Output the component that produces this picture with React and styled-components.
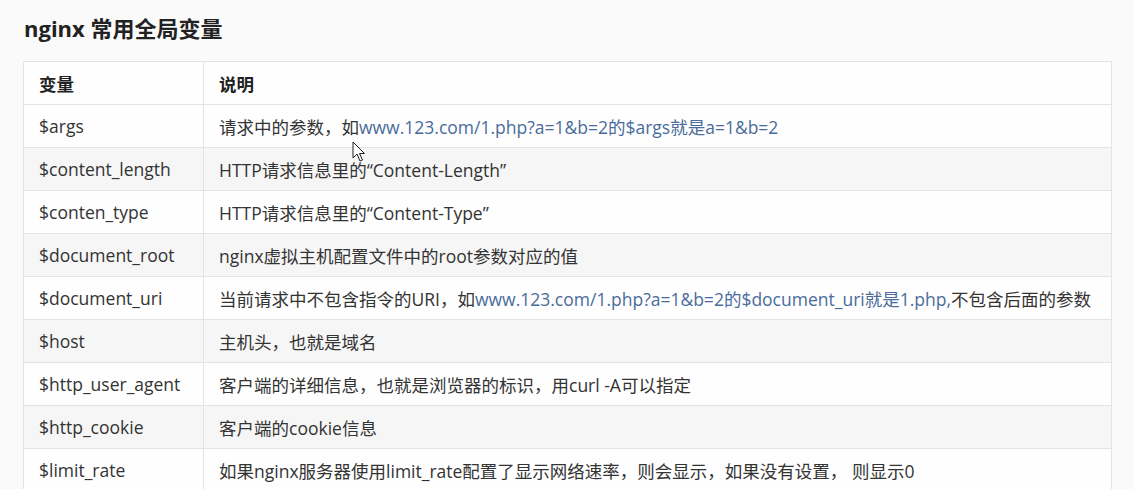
import React from 'react'
import styled, { createGlobalStyle } from 'styled-components'

const GlobalStyle = createGlobalStyle`
  html, body {
    margin: 0;
    padding: 0;
    background: #fafafa;
    overflow: hidden;
  }
  body {
    font-family: "Open Sans", "Noto Sans CJK SC", sans-serif;
    color: #333;
  }
`

const Page = styled.div`
  position: relative;
  padding: 13px 22px 0 23px;
  height: 489px;
  box-sizing: border-box;
`

const Title = styled.h2`
  margin: 0 0 17px 1px;
  font-size: 22px;
  line-height: 31px;
  font-weight: 700;
  color: #222;
  font-family: "Open Sans", "Noto Sans CJK SC", sans-serif;
`

const Table = styled.table`
  width: 1089px;
  border-collapse: collapse;
  background: #fff;
  font-size: 17.5px;
`

const Row = styled.tr`
  height: 43px;
  background: ${(p) => (p.$striped ? '#f6f6f6' : '#fefefe')};
`

const Cell = styled.td`
  border: 1px solid #e4e4e4;
  padding: 0 15px;
  white-space: nowrap;
  color: #333;
  width: ${(p) => (p.$first ? '149px' : 'auto')};
`

const Head = styled.th`
  border: 1px solid #e4e4e4;
  padding: 0 15px;
  text-align: left;
  font-weight: 700;
  color: #222;
  width: ${(p) => (p.$first ? '149px' : 'auto')};
`

const Link = styled.span`
  color: #4a6c9b;
`

const Cursor = styled.svg`
  position: absolute;
  left: 352px;
  top: 141px;
`

const rows = [
  ['$args', <>请求中的参数，如<Link>www.123.com/1.php?a=1&amp;b=2的$args就是a=1&amp;b=2</Link></>],
  ['$content_length', 'HTTP请求信息里的“Content-Length”'],
  ['$conten_type', 'HTTP请求信息里的“Content-Type”'],
  ['$document_root', 'nginx虚拟主机配置文件中的root参数对应的值'],
  ['$document_uri', <>当前请求中不包含指令的URI，如<Link>www.123.com/1.php?a=1&amp;b=2的$document_uri就是1.php,</Link>不包含后面的参数</>],
  ['$host', '主机头，也就是域名'],
  ['$http_user_agent', '客户端的详细信息，也就是浏览器的标识，用curl -A可以指定'],
  ['$http_cookie', '客户端的cookie信息'],
  ['$limit_rate', '如果nginx服务器使用limit_rate配置了显示网络速率，则会显示，如果没有设置， 则显示0'],
]

export default function App() {
  return (
    <Page>
      <GlobalStyle />
      <Title>nginx 常用全局变量</Title>
      <Table>
        <thead>
          <Row>
            <Head $first>变量</Head>
            <Head>说明</Head>
          </Row>
        </thead>
        <tbody>
          {rows.map(([name, desc], i) => (
            <Row key={name} $striped={i % 2 === 1}>
              <Cell $first>{name}</Cell>
              <Cell>{desc}</Cell>
            </Row>
          ))}
        </tbody>
      </Table>
      <Cursor width="14" height="22" viewBox="0 0 14 22">
        <path d="M1 1 L1 17 L5 13 L8 20 L10.5 19 L7.5 12.5 L12.5 12.5 Z" fill="#fff" stroke="#222" strokeWidth="1" strokeLinejoin="round" />
      </Cursor>
    </Page>
  )
}
